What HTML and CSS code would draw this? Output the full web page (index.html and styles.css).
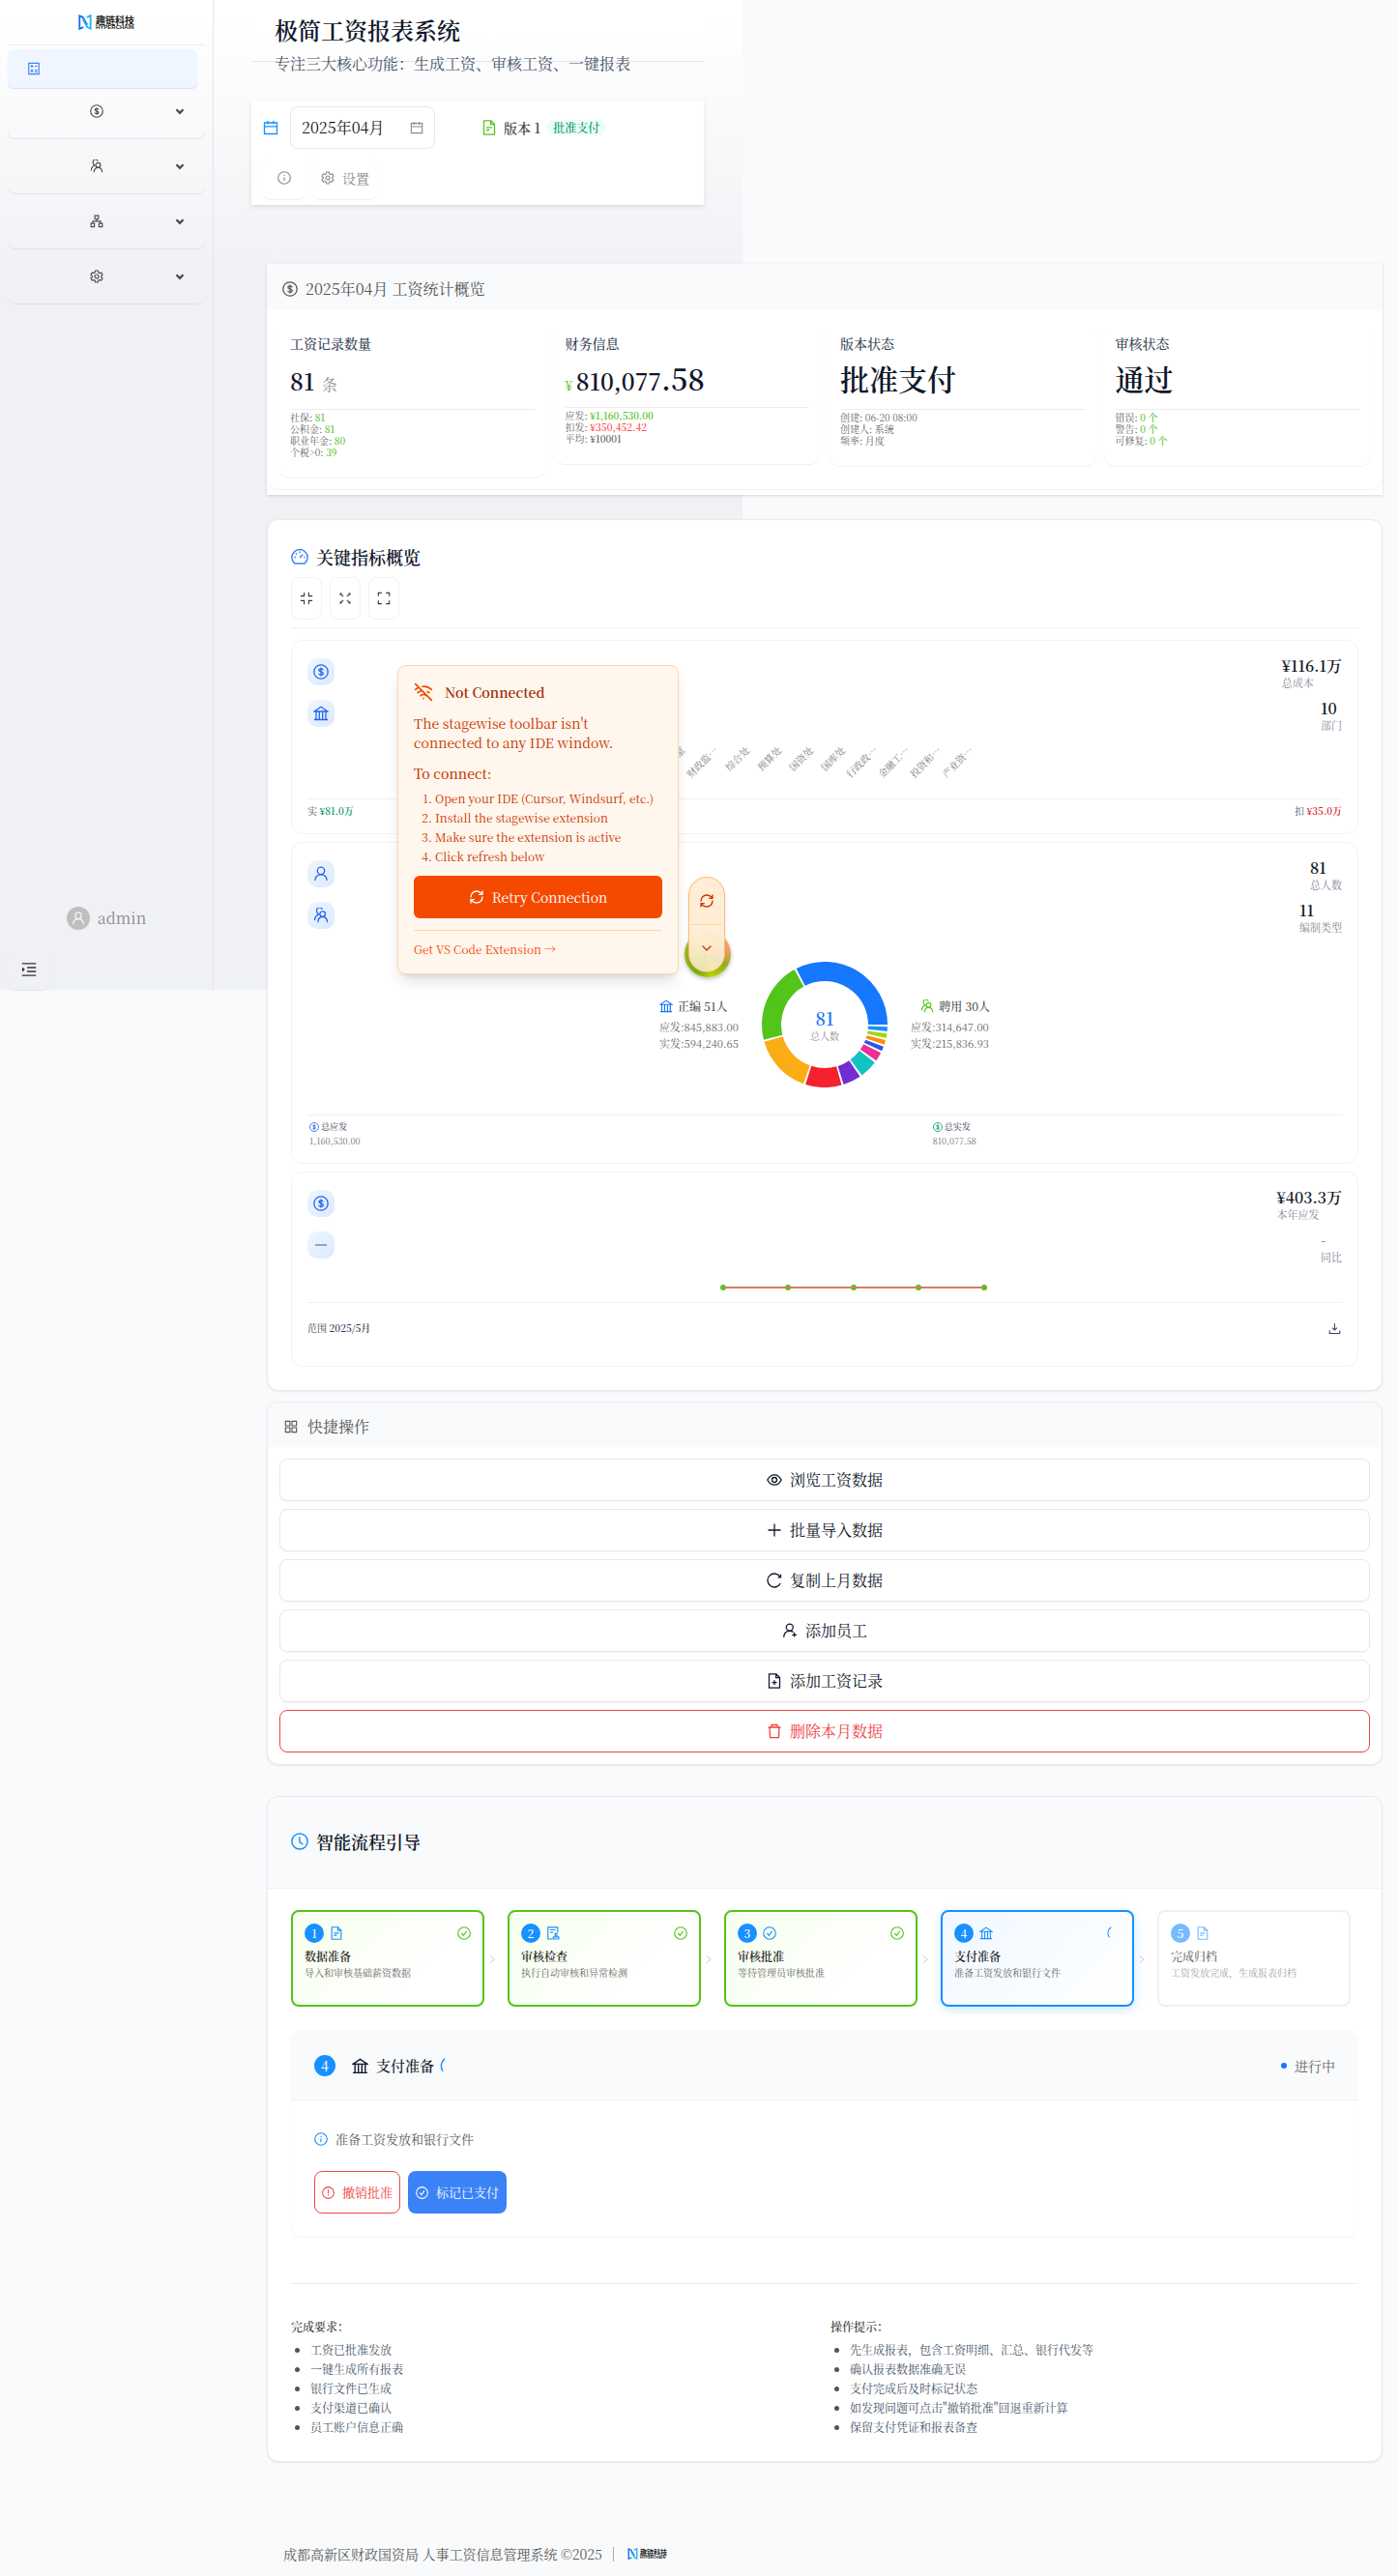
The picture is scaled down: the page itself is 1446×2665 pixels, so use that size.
FILE: index.html
```html
<!DOCTYPE html>
<html lang="zh-CN">
<head>
<meta charset="utf-8">
<meta name="viewport" content="width=device-width, initial-scale=1">
<title>极简工资报表系统</title>
<link rel="stylesheet" href="styles.css">
</head>
<body>
<svg class="sprite" aria-hidden="true">
  <symbol id="calc" viewBox="0 0 16 16"><path d="M2 1.500h12v13H2zM5.700 3.500v3.400M4 5.200h3.400M9 5.200h3M9 9.700h3M9 11.900h3M4.400 9.400l2.600 2.800M7 9.400l-2.600 2.800"/></symbol>
  <symbol id="dollar" viewBox="0 0 16 16"><circle cx="8" cy="8" r="7.200"/><path d="M10.200 6.300C10 5.300 9.200 4.800 8 4.800S5.900 5.400 5.900 6.300C5.900 8.600 10.300 7.300 10.300 9.700c0 1-1 1.500-2.300 1.500S5.800 10.700 5.700 9.700M8 3.600v8.800"/></symbol>
  <symbol id="team" viewBox="0 0 16 16"><circle cx="9.700" cy="6.600" r="2.800"/><path d="M4.800 15.200c.2-3.400 2.100-5.700 4.900-5.700s4.700 2.300 4.900 5.700M9.400 1.900A3 3 0 0 0 3.700 3.800c0 1.400.8 2.500 2 3C3.300 7.800 1.600 10.200 1.500 13.200"/></symbol>
  <symbol id="cluster" viewBox="0 0 16 16"><path d="M5.800 1.300h4.400v3.900H5.800zM1.300 10.500h4v4h-4zM10.700 10.500h4v4h-4zM8 5.200v2.600M3.300 10.500V7.800h9.400v2.700"/></symbol>
  <symbol id="gear" viewBox="0 0 16 16"><circle cx="8" cy="8" r="2.300"/><path d="M6.500 1.200h3l.5 2.100 1.300.8 2.100-.7 1.500 2.600-1.600 1.400v1.400l1.600 1.300-1.500 2.600-2.100-.6-1.300.7-.5 2h-3l-.5-2-1.300-.7-2.100.6-1.500-2.600 1.600-1.300V7.400L1.100 6l1.500-2.600 2.100.7L6 3.300z"/></symbol>
  <symbol id="calendar" viewBox="0 0 16 16"><path d="M1.500 3h13v11.500h-13zM1.500 6.800h13M5 1v3.500M11 1v3.500"/></symbol>
  <symbol id="file" viewBox="0 0 16 16"><path d="M2.500.8h7.300l3.700 3.700v10.700h-11zM9.600.9v3.800h3.800M5 7.900h6M5 10.500h3.400"/></symbol>
  <symbol id="fileadd" viewBox="0 0 16 16"><path d="M2.500.8h7.300l3.700 3.700v10.700h-11zM9.600.9v3.800h3.800M8 7.200v5M5.500 9.700h5"/></symbol>
  <symbol id="info" viewBox="0 0 16 16"><circle cx="8" cy="8" r="7.200"/><path d="M8 7v4.600M8 4.300v1.500"/></symbol>
  <symbol id="warn" viewBox="0 0 16 16"><circle cx="8" cy="8" r="7.200"/><path d="M8 4v5M8 10.300v1.500"/></symbol>
  <symbol id="check" viewBox="0 0 16 16"><circle cx="8" cy="8" r="7.200"/><path d="M5 8l2.300 2.600L11 5.400"/></symbol>
  <symbol id="clock" viewBox="0 0 16 16"><circle cx="8" cy="8" r="7.200"/><path d="M7.900 4v4.500l3 2.200"/></symbol>
  <symbol id="bank" viewBox="0 0 16 16"><path d="M1 6h14L8 1.300zM1 14.500h14M3 6v8.500M6.300 6v8.500M9.700 6v8.500M13 6v8.500"/></symbol>
  <symbol id="user" viewBox="0 0 16 16"><circle cx="8" cy="4.900" r="3.700"/><path d="M1.800 15c.2-3.800 2.700-6.200 6.200-6.200s6 2.400 6.200 6.200"/></symbol>
  <symbol id="useradd" viewBox="0 0 16 16"><circle cx="7.800" cy="4.600" r="3.500"/><path d="M1.700 14.800c.2-4 2.700-6.500 6.100-6.500 1.500 0 2.800.5 3.800 1.300M12.600 10v4.600M10.300 12.300h4.600"/></symbol>
  <symbol id="dash" viewBox="0 0 16 16"><path d="M3.500 14.200A7.200 7.200 0 1 1 12.500 14.200zM8 8.800l2.800-2.900M3 8.500h1.500M11.800 8.500H13M8 3v1.500M4.300 4.700l1 1"/></symbol>
  <symbol id="compress" viewBox="0 0 16 16"><path d="M5.300 1v4.300H1M10.700 1v4.300H15M5.300 15v-4.300H1M10.700 15v-4.300H15"/></symbol>
  <symbol id="shrink" viewBox="0 0 16 16"><path d="M2.500 2.500l3.300 3.300M13.500 2.500l-3.300 3.300M2.500 13.500l3.300-3.300M13.500 13.500l-3.300-3.300M2.300 4V2.300H4M13.700 4V2.300H12M2.300 12v1.700H4M13.700 12v1.700H12"/></symbol>
  <symbol id="expand" viewBox="0 0 16 16"><path d="M1.500 5.500v-4h4M10.500 1.500h4v4M1.500 10.500v4h4M14.500 10.500v4h-4"/></symbol>
  <symbol id="grid" viewBox="0 0 16 16"><path d="M1.500 1.500h5.300v5.300H1.500zM9.200 1.500h5.300v5.300H9.200zM1.500 9.200h5.300v5.300H1.500zM9.200 9.200h5.300v5.300H9.200z"/></symbol>
  <symbol id="eye" viewBox="0 0 16 16"><path d="M.8 8C2.600 4.400 5 2.800 8 2.800S13.400 4.400 15.200 8C13.400 11.600 11 13.200 8 13.200S2.600 11.600.8 8z"/><circle cx="8" cy="8" r="2.500"/></symbol>
  <symbol id="plus" viewBox="0 0 16 16"><path d="M8 1.500v13M1.500 8h13"/></symbol>
  <symbol id="reload" viewBox="0 0 16 16"><path d="M14.300 11A7 7 0 1 1 13.600 3.800M14.500 1.800v3h-3"/></symbol>
  <symbol id="trash" viewBox="0 0 16 16"><path d="M1.500 4h13M5 4V1.500h6V4M3 4l.6 10.700h8.800L13 4"/></symbol>
  <symbol id="audit" viewBox="0 0 16 16"><path d="M7.500 14.800H2V1h11.500v6.500M4.500 4h6.500M4.500 7h3.500M8.300 14.800h6.500v-2.300H8.300zM11.500 12.500v-1.700"/><circle cx="11.500" cy="9.600" r="1.400"/></symbol>
  <symbol id="right" viewBox="0 0 16 16"><path d="M5 3l6 5-6 5"/></symbol>
  <symbol id="spin" viewBox="0 0 16 16"><path d="M2.800 13C.2 8.800.8 3.800 4.800.8"/></symbol>
  <symbol id="download" viewBox="0 0 16 16"><path d="M8 1.500v8M5 7l3 3 3-3M1.500 10.500v3.700h13v-3.700"/></symbol>
  <symbol id="unfold" viewBox="0 0 16 16"><path d="M.8 1.800h14.400M6 6h9.200M6 10h9.200M.8 14.200h14.400"/><path d="M1 5.600v4.800L3.900 8z" fill="currentColor" stroke="none"/></symbol>
  <symbol id="chev" viewBox="0 0 24 24"><path d="M6 9l6 6 6-6"/></symbol>
  <symbol id="refresh" viewBox="0 0 24 24"><path d="M3 12a9 9 0 0 1 9-9 9.750 9.750 0 0 1 6.740 2.740L21 8M21 3v5h-5M21 12a9 9 0 0 1-9 9 9.750 9.750 0 0 1-6.740-2.740L3 16M8 16H3v5"/></symbol>
  <symbol id="wifi" viewBox="0 0 24 24"><path d="M12 20h.01M8.500 16.429a5 5 0 0 1 7 0M5 12.859a10 10 0 0 1 5.170-2.690M19 12.859a10 10 0 0 0-2.007-1.523M2 8.820a15 15 0 0 1 4.177-2.643M22 8.820a15 15 0 0 0-11.288-3.764M2 2l20 20"/></symbol>
  <symbol id="mark" viewBox="0 0 14 16">
    <path d="M5.200 13.200L1.300 14.900V1.400l3.200 1.400 4.700 8" fill="none" stroke="#1668f0" stroke-width="1.800"/>
    <path d="M8.800 2.800l3.900-1.700v13.500l-3.200-1.400-4.700-8" fill="none" stroke="#1fb6f5" stroke-width="1.800"/>
  </symbol>
</svg>

<div class="app">
  <aside class="side">
    <div class="side-logo"><span class="logo"><svg><use href="#mark"/></svg><span><b>趣链科技</b><i>HYPERCHAIN</i></span></span></div>
    <nav class="nav">
      <a href="#" class="nav-item active" aria-label="工资报表"><svg class="i"><use href="#calc"/></svg></a>
      <a href="#" class="nav-item" aria-label="工资"><svg class="i"><use href="#dollar"/></svg><svg class="chev"><use href="#chev"/></svg></a>
      <a href="#" class="nav-item" aria-label="人员"><svg class="i"><use href="#team"/></svg><svg class="chev"><use href="#chev"/></svg></a>
      <a href="#" class="nav-item" aria-label="组织"><svg class="i"><use href="#cluster"/></svg><svg class="chev"><use href="#chev"/></svg></a>
      <a href="#" class="nav-item" aria-label="系统"><svg class="i"><use href="#gear"/></svg><svg class="chev"><use href="#chev"/></svg></a>
    </nav>
    <div class="side-user"><span class="avatar"><svg class="i"><use href="#user"/></svg></span><span>admin</span></div>
    <button class="collapse" aria-label="展开菜单"><svg class="i"><use href="#unfold"/></svg></button>
  </aside>

  <main class="main">
    <header class="head">
      <h1>极简工资报表系统</h1>
      <p>专注三大核心功能：生成工资、审核工资、一键报表</p>
    </header>

    <section class="tools">
      <div class="tools-row">
        <svg class="i blue"><use href="#calendar"/></svg>
        <label class="date"><input type="text" value="2025年04月" aria-label="月份"><svg class="i"><use href="#calendar"/></svg></label>
        <div class="version"><svg class="i green"><use href="#file"/></svg><span>版本 1</span><span class="tag">批准支付</span></div>
      </div>
      <div class="tools-row second">
        <button class="ghost" aria-label="信息"><svg class="i"><use href="#info"/></svg></button>
        <button class="ghost wide"><svg class="i"><use href="#gear"/></svg>设置</button>
      </div>
    </section>

    <div class="content">
      <section class="stats">
        <h2 class="bar"><svg class="i"><use href="#dollar"/></svg>2025年04月 工资统计概览</h2>
        <div class="stat-grid">
          <article class="stat">
            <h3>工资记录数量</h3>
            <div class="value"><span class="mid">81</span> <span class="unit">条</span></div>
            <ul><li>社保: <b class="ok">81</b></li><li>公积金: <b class="ok">81</b></li><li>职业年金: <b class="ok">80</b></li><li>个税&gt;0: <b class="ok">39</b></li></ul>
          </article>
          <article class="stat">
            <h3>财务信息</h3>
            <div class="value money"><span class="yen">¥</span> <span class="mid">810,077</span>.58</div>
            <ul><li>应发: <b class="ok strong">¥1,160,530.00</b></li><li>扣发: <b class="bad strong">¥350,452.42</b></li><li>平均: <b class="strong">¥10001</b></li></ul>
          </article>
          <article class="stat">
            <h3>版本状态</h3>
            <div class="value">批准支付</div>
            <ul><li>创建: 06-20 08:00</li><li>创建人: 系统</li><li>频率: 月度</li></ul>
          </article>
          <article class="stat">
            <h3>审核状态</h3>
            <div class="value">通过</div>
            <ul><li>错误: <b class="ok">0 个</b></li><li>警告: <b class="ok">0 个</b></li><li>可修复: <b class="ok">0 个</b></li></ul>
          </article>
        </div>
      </section>

      <section class="card key">
        <h2 class="title"><svg class="i vivid"><use href="#dash"/></svg>关键指标概览</h2>
        <div class="squares">
          <button aria-label="压缩"><svg class="i"><use href="#compress"/></svg></button>
          <button aria-label="收缩"><svg class="i"><use href="#shrink"/></svg></button>
          <button aria-label="全屏"><svg class="i"><use href="#expand"/></svg></button>
        </div>
        <div class="panels">
          <article class="panel">
            <div class="panel-head">
              <div class="tiles"><span class="tile"><svg class="i"><use href="#dollar"/></svg></span><span class="tile"><svg class="i"><use href="#bank"/></svg></span></div>
              <div class="figures"><div><strong>¥116.1万</strong><small>总成本</small></div><div><strong>10</strong><small>部门</small></div></div>
            </div>
            <svg class="chart-a" viewBox="0 0 680 68">
              <g class="axis">
                <text transform="translate(196 19) rotate(-45)">办公室</text>
                <text transform="translate(230 19) rotate(-45)">财政监…</text>
                <text transform="translate(263 19) rotate(-45)">综合处</text>
                <text transform="translate(296 19) rotate(-45)">预算处</text>
                <text transform="translate(329 19) rotate(-45)">国资处</text>
                <text transform="translate(362 19) rotate(-45)">国库处</text>
                <text transform="translate(395 19) rotate(-45)">行政政…</text>
                <text transform="translate(428 19) rotate(-45)">金融工…</text>
                <text transform="translate(461 19) rotate(-45)">投资和…</text>
                <text transform="translate(494 19) rotate(-45)">产业资…</text>
              </g>
            </svg>
            <div class="foot between"><span>实 <b class="emerald">¥81.0万</b></span><span>扣 <b class="red">¥35.0万</b></span></div>
          </article>

          <article class="panel">
            <div class="panel-head">
              <div class="tiles"><span class="tile"><svg class="i"><use href="#user"/></svg></span><span class="tile"><svg class="i"><use href="#team"/></svg></span></div>
              <div class="figures"><div><strong>81</strong><small>总人数</small></div><div><strong>11</strong><small>编制类型</small></div></div>
            </div>
            <div class="donut-row">
              <div class="staff"><h4><svg class="i link"><use href="#bank"/></svg>正编 51人</h4><p>应发:845,883.00</p><p>实发:594,240.65</p></div>
              <svg class="donut" viewBox="-65 -65 130 130">
                <g id="ring"></g>
                <text y="1" class="donut-num">81</text>
                <text y="16" class="donut-cap">总人数</text>
              </svg>
              <div class="staff end"><h4><svg class="i green"><use href="#team"/></svg>聘用 30人</h4><p>应发:314,647.00</p><p>实发:215,836.93</p></div>
            </div>
            <div class="foot sums">
              <div><span><svg class="i royal"><use href="#dollar"/></svg>总应发</span><small>1,160,530.00</small></div>
              <div><span><svg class="i emerald"><use href="#dollar"/></svg>总实发</span><small>810,077.58</small></div>
            </div>
          </article>

          <article class="panel">
            <div class="panel-head">
              <div class="tiles"><span class="tile"><svg class="i"><use href="#dollar"/></svg></span><span class="tile"><span class="dash"></span></span></div>
              <div class="figures"><div><strong>¥403.3万</strong><small>本年应发</small></div><div><strong class="muted">-</strong><small>同比</small></div></div>
            </div>
            <svg class="chart-c" viewBox="0 0 340 39">
              <g fill="#52c41a"><circle cx="65" cy="24" r="3"/><circle cx="132" cy="24" r="3"/><circle cx="200" cy="24" r="3"/><circle cx="267" cy="24" r="3"/><circle cx="335" cy="24" r="3"/></g>
              <path d="M65 24h270" stroke="#d4805f" stroke-width="2"/>
            </svg>
            <div class="foot between tall"><span>范围 <b>2025/5月</b></span><button aria-label="下载"><svg class="i"><use href="#download"/></svg></button></div>
          </article>
        </div>
      </section>

      <section class="card quick">
        <h2 class="bar"><svg class="i"><use href="#grid"/></svg>快捷操作</h2>
        <div class="quick-list">
          <button><svg class="i"><use href="#eye"/></svg>浏览工资数据</button>
          <button><svg class="i"><use href="#plus"/></svg>批量导入数据</button>
          <button><svg class="i"><use href="#reload"/></svg>复制上月数据</button>
          <button><svg class="i"><use href="#useradd"/></svg>添加员工</button>
          <button><svg class="i"><use href="#fileadd"/></svg>添加工资记录</button>
          <button class="danger"><svg class="i"><use href="#trash"/></svg>删除本月数据</button>
        </div>
      </section>

      <section class="card flow">
        <div class="flow-head"><h2 class="title"><svg class="i blue"><use href="#clock"/></svg>智能流程引导</h2></div>
        <div class="flow-body">
          <div class="steps">
            <article class="step done"><div class="step-top"><span class="num">1</span><svg class="i"><use href="#file"/></svg><svg class="i state"><use href="#check"/></svg></div><h3>数据准备</h3><p>导入和审核基础薪资数据</p><svg class="i arrow"><use href="#right"/></svg></article>
            <article class="step done"><div class="step-top"><span class="num">2</span><svg class="i"><use href="#audit"/></svg><svg class="i state"><use href="#check"/></svg></div><h3>审核检查</h3><p>执行自动审核和异常检测</p><svg class="i arrow"><use href="#right"/></svg></article>
            <article class="step done"><div class="step-top"><span class="num">3</span><svg class="i"><use href="#check"/></svg><svg class="i state"><use href="#check"/></svg></div><h3>审核批准</h3><p>等待管理员审核批准</p><svg class="i arrow"><use href="#right"/></svg></article>
            <article class="step current"><div class="step-top"><span class="num">4</span><svg class="i"><use href="#bank"/></svg><svg class="i state"><use href="#spin"/></svg></div><h3>支付准备</h3><p>准备工资发放和银行文件</p><svg class="i arrow"><use href="#right"/></svg></article>
            <article class="step todo"><div class="step-top"><span class="num">5</span><svg class="i"><use href="#file"/></svg></div><h3>完成归档</h3><p>工资发放完成，生成报表归档</p></article>
          </div>
          <article class="detail">
            <header><span class="num big">4</span><svg class="i"><use href="#bank"/></svg><h3>支付准备</h3><svg class="i spin"><use href="#spin"/></svg><span class="doing">进行中</span></header>
            <div class="detail-body">
              <p><svg class="i blue"><use href="#info"/></svg>准备工资发放和银行文件</p>
              <div class="actions"><button class="outline"><svg class="i"><use href="#warn"/></svg>撤销批准</button><button class="solid"><svg class="i"><use href="#check"/></svg>标记已支付</button></div>
            </div>
          </article>
          <div class="notes">
            <div><h4>完成要求：</h4><ul><li>工资已批准发放</li><li>一键生成所有报表</li><li>银行文件已生成</li><li>支付渠道已确认</li><li>员工账户信息正确</li></ul></div>
            <div><h4>操作提示：</h4><ul><li>先生成报表，包含工资明细、汇总、银行代发等</li><li>确认报表数据准确无误</li><li>支付完成后及时标记状态</li><li>如发现问题可点击"撤销批准"回退重新计算</li><li>保留支付凭证和报表备查</li></ul></div>
          </div>
        </div>
      </section>

      <footer class="footer"><span>成都高新区财政国资局 人事工资信息管理系统 ©2025</span><i class="sep"></i><span class="logo small"><svg><use href="#mark"/></svg><span><b>趣链科技</b><i>HYPERCHAIN</i></span></span></footer>
    </div>
  </main>

  <div class="orb"></div>
  <div class="pill"><button aria-label="刷新"><svg class="lu"><use href="#refresh"/></svg></button><button aria-label="收起"><svg class="lu"><use href="#chev"/></svg></button></div>
  <aside class="popup">
    <h2><svg class="lu"><use href="#wifi"/></svg>Not Connected</h2>
    <p>The stagewise toolbar isn't connected to any IDE window.</p>
    <h3>To connect:</h3>
    <ol><li>Open your IDE (Cursor, Windsurf, etc.)</li><li>Install the stagewise extension</li><li>Make sure the extension is active</li><li>Click refresh below</li></ol>
    <button><svg class="lu"><use href="#refresh"/></svg>Retry Connection</button>
    <div class="popup-foot"><a href="#">Get VS Code Extension →</a></div>
  </aside>
</div>
<script src="chart.js"></script>
</body>
</html>
```
FILE: styles.css
```css
* { box-sizing: border-box; }
body, h1, h2, h3, h4, p, ul, ol { margin: 0; padding: 0; }
ul { list-style: none; }
a { color: inherit; text-decoration: none; }
b, strong { font-weight: 600; }
button, input { font: inherit; color: inherit; background: none; border: 0; padding: 0; }
button { display: inline-flex; align-items: center; justify-content: center; }
body {
  font-family: "Noto Serif CJK SC", "Source Han Serif SC", "Liberation Serif", "Noto Sans CJK SC", serif;
  font-size: 14px; line-height: 22px; color: #5a5a5a; background: #f8fafc;
}
.sprite { display: none; }
.i, .lu, .chev { flex: none; fill: none; stroke: currentColor; stroke-width: 1.3; width: 14px; height: 14px; display: block; }
.lu { stroke-width: 2; stroke-linecap: round; stroke-linejoin: round; width: 16px; height: 16px; }
.logo { display: flex; align-items: center; gap: 4px; font-family: "Noto Sans CJK SC", sans-serif; color: #222; }
.logo svg { flex: none; width: 14px; height: 16px; }
.logo b { display: block; font-size: 10px; line-height: 11px; font-weight: 700; }
.logo i { display: block; font: 700 6px/5px "Liberation Sans", sans-serif; }
.logo.small { gap: 2px; }
.logo.small svg { width: 11px; height: 12px; }
.logo.small b { font-size: 7px; line-height: 8px; }
.logo.small i { font-size: 4px; line-height: 4px; }
.blue { color: #1890ff; }
.vivid { color: #3b82f6; }
.link { color: #1677ff; }
.royal { color: #2563eb; }
.green, .ok { color: #52c41a; }
.bad { color: #ff4d4f; }
.emerald { color: #059669; }
.red { color: #dc2626; }

.app {
  position: relative; display: flex; align-items: flex-start;
  background: linear-gradient(180deg, #fff 0, #fff 20px, #f0f1f5 300px) 0 0 / 768px 1024px no-repeat;
}

.side { flex: none; width: 221px; height: 1024px; padding: 0 8px; border-right: 1px solid #e4e5e9; display: flex; flex-direction: column; }
.side-logo { height: 47px; display: flex; align-items: center; justify-content: center; border-bottom: 1px solid #ededf0; }
.nav { padding-top: 4px; flex: 1; }
.nav-item { display: flex; align-items: center; height: 56px; margin-bottom: 1px; padding-left: 85px; padding-right: 19px; border-radius: 8px; box-shadow: 0 1px 0 #e2e3e7; color: #4b4b4b; }
.nav-item.active { height: 40px; margin: 0 8px -4px 0; padding-left: 20px; background: #eff6ff; color: #3b82f6; box-shadow: 0 1px 1px #d5dff0; border-radius: 6px; }
.nav-item .chev { margin-left: auto; width: 14px; height: 14px; stroke-width: 4; }
.side-user { display: flex; align-items: center; justify-content: center; gap: 8px; height: 24px; margin-bottom: 20px; font-size: 16px; color: #8c8c8c; }
.avatar { width: 24px; height: 24px; border-radius: 50%; background: #bfbfbf; color: #fff; display: flex; align-items: center; justify-content: center; }
.collapse { width: 44px; height: 42px; border-radius: 8px; box-shadow: 0 1px 1px #e4e5e9; color: #333; }
.collapse .i { width: 16px; height: 16px; }

.main { flex: 1; min-width: 0; padding: 0 16px 0 39px; }
.head { width: 468px; height: 64px; padding: 15px 24px 0; background: rgba(255,255,255,.6); border-bottom: 1px solid #e3e4e8; }
.head h1 { font-size: 24px; line-height: 32px; font-weight: 600; color: #0f172a; }
.head p { font-size: 16px; line-height: 24px; margin-top: 7px; color: #475569; white-space: nowrap; }

.tools { width: 468px; margin-top: 40px; padding: 6px 12px; background: #fff; box-shadow: 0 2px 5px rgba(0,0,0,.1); }
.tools-row { display: flex; align-items: center; height: 44px; }
.tools-row.second { margin-top: 8px; gap: 8px; color: #8c8c8c; }
.tools-row > .i { width: 16px; height: 16px; }
.date { display: flex; align-items: center; width: 150px; height: 44px; margin-left: 12px; padding: 0 11px; border: 1px solid #e5e7eb; border-radius: 8px; color: #8c8c8c; }
.date input { flex: 1; min-width: 0; font-size: 16px; color: #0f172a; outline: none; }
.version { display: flex; align-items: center; gap: 7px; margin-left: 48px; font-weight: 500; color: #333; }
.version .i { width: 16px; height: 16px; }
.tag { padding: 0 6px; font-size: 12px; line-height: 16px; border-radius: 6px; background: #ecfdf5; color: #059669; }
.ghost { width: 44px; height: 44px; border-radius: 8px; box-shadow: 0 1px 1px #eee; }
.ghost.wide { width: 66px; gap: 8px; }

.content { padding-left: 16px; }
.bar { display: flex; align-items: center; gap: 8px; font-size: 16px; font-weight: 400; color: #555; background: #f8fafc; }
.stats { margin-top: 61px; padding-bottom: 6px; background: #fff; box-shadow: 0 1px 3px rgba(0,0,0,.14); }
.stats .bar { height: 48px; padding: 3px 16px 0; }
.stats .bar .i { width: 16px; height: 16px; }
.stat-grid { display: grid; grid-template-columns: repeat(4, 1fr); gap: 8px; align-items: start; padding: 12px; border-radius: 0 0 12px 12px; box-shadow: 0 1px 0 #f1f1f3; }
.stat { padding: 11px 12px 20px; border-radius: 12px; box-shadow: 0 1px 1px #f0f0f2; }
.stat h3 { font-size: 14px; font-weight: 500; color: #334155; }
.value { font-size: 30px; line-height: 50px; padding-bottom: 7px; font-weight: 600; color: #0f172a; white-space: nowrap; border-bottom: 1px solid #ececee; }
.value.money { padding-bottom: 5px; }
.value span { line-height: 24px; }
.value .mid { font-size: 24px; }
.value .unit { font-size: 16px; font-weight: 400; color: #8c8c9c; }
.value .yen { font-size: 14px; font-weight: 400; color: #52c41a; margin-right: -4px; }
.stat ul { padding-top: 2px; font-size: 10px; line-height: 12px; color: #666; }
.stat b { font-weight: 500; }
.stat b.strong { font-weight: 600; }

.card { background: #fff; border: 1px solid #e8eaed; border-radius: 12px; box-shadow: 0 1px 2px rgba(0,0,0,.08); }
.title { display: flex; align-items: center; gap: 8px; font-size: 18px; line-height: 28px; font-weight: 600; color: #0f172a; }
.title .i { width: 18px; height: 18px; }
.key { margin-top: 25px; padding: 24px; }
.squares { display: flex; gap: 8px; padding: 7px 0 8px; border-bottom: 1px solid #f0f0f2; }
.squares button { width: 32px; height: 44px; border: 1px solid #f1f1f4; border-radius: 8px; color: #333a48; }
.panels { display: grid; gap: 8px; margin-top: 12px; }
.panel { padding: 17px 16px 15px; border: 1px solid #f1f2f4; border-radius: 12px; }
.panel-head { display: flex; justify-content: space-between; }
.tiles { display: grid; gap: 15px; align-content: start; padding-top: 1px; height: 78px; }
.tile { width: 28px; height: 28px; border-radius: 10px; background: linear-gradient(135deg, #eff6ff, #dbeafe); color: #2563eb; display: flex; align-items: center; justify-content: center; }
.tile .i { width: 16px; height: 16px; }
.tile .dash { width: 12px; height: 2px; background: #94a3b8; }
.figures { display: grid; gap: 10px; justify-items: end; }
.figures strong { display: block; font-size: 16px; line-height: 18px; color: #0f172a; }
.figures strong.muted { color: #8c8c8c; font-weight: 400; }
.figures small { display: block; font-size: 11px; line-height: 16px; color: #7f8694; }
.chart-a { display: block; width: 680px; height: 68px; margin: 0 auto; }
.axis { font-size: 10px; text-anchor: end; fill: #7a7a7a; }
.foot { border-top: 1px solid #f0f0f2; padding-top: 4px; font-size: 10px; line-height: 16px; color: #475569; }
.between { display: flex; justify-content: space-between; align-items: center; }
.foot.tall { padding: 18px 0 16px; color: #334155; }
.foot.tall .i { width: 13px; height: 13px; margin-right: 1px; }
.donut-row { display: flex; align-items: center; justify-content: center; gap: 24px; height: 186px; }
.donut { width: 130px; height: 130px; }
.donut text { text-anchor: middle; }
.donut-num { font-size: 18px; font-weight: 600; fill: #1677ff; }
.donut-cap { font-size: 10px; fill: #8c8c8c; }
.staff { width: 82px; font-size: 11px; line-height: 17px; color: #666; white-space: nowrap; }
.staff h4 { display: flex; align-items: center; gap: 5px; margin-bottom: 5px; font-size: 12px; font-weight: 500; color: #4a4a4a; }
.staff.end h4 { justify-content: flex-end; }
.sums { display: grid; grid-template-columns: 3fr 2fr; font-size: 9px; padding-left: 2px; }
.sums > div + div { padding-left: 4px; }
.sums span { display: flex; align-items: center; gap: 2px; font-weight: 500; }
.sums .i { width: 10px; height: 10px; }
.sums small { display: block; font-size: 9px; line-height: 14px; color: #6b7280; }
.chart-c { display: block; width: 340px; height: 39px; margin: 0 auto; }

.quick { margin-top: 11px; overflow: hidden; }
.quick .bar { height: 46px; padding: 4px 17px 0; gap: 10px; }
.quick-list { display: grid; gap: 8px; padding: 12px; }
.quick-list button { height: 44px; gap: 8px; border: 1px solid #e5e7eb; border-radius: 8px; font-size: 16px; color: #0f172a; box-shadow: 0 1px 1px rgba(0,0,0,.04); }
.quick-list .i { width: 16px; height: 16px; }
.quick-list .danger { border-color: #ef4444; color: #ef4444; }

.flow { margin-top: 32px; overflow: hidden; }
.flow-head { height: 95px; padding: 0 24px 2px; display: flex; align-items: center; background: #f8fafc; border-bottom: 1px solid #f0f0f2; }
.flow-body { padding: 0 24px 25px; }
.steps { display: grid; grid-template-columns: repeat(5, 1fr); gap: 24px; padding: 22px 8px 8px 0; overflow: hidden; }
.step { position: relative; height: 100px; padding: 12px; border: 2px solid #f0f0f0; border-radius: 8px; color: #1890ff; }
.step-top { display: flex; align-items: center; gap: 6px; }
.num { width: 20px; height: 20px; border-radius: 50%; background: #1890ff; color: #fff; font-size: 12px; line-height: 20px; text-align: center; font-weight: 500; }
.state { margin-left: auto; }
.step h3 { margin-top: 5px; font-size: 12px; line-height: 18px; font-weight: 600; color: #262626; }
.step p { margin-top: 1px; font-size: 10px; line-height: 14px; color: #666; }
.done { border-color: #52c41a; background: linear-gradient(135deg, #f6ffed, #fff 70%); }
.done .state { color: #52c41a; }
.current { border-color: #1890ff; background: linear-gradient(135deg, #f0f8ff, #fff); box-shadow: 0 4px 12px rgba(24,144,255,.2); }
.todo > * { opacity: .6; }
.arrow { position: absolute; right: -16px; top: 43px; width: 12px; height: 12px; color: #ccc; }

.detail { margin-top: 16px; border-radius: 12px; box-shadow: 0 1px 1px #f0f0f2; }
.detail header { display: flex; align-items: center; height: 73px; padding: 2px 24px 0; background: #f8fafc; border-bottom: 1px solid #f0f0f2; border-radius: 12px 12px 0 0; color: #0f172a; }
.detail h3 { margin: 0 6px 0 8px; font-size: 15px; font-weight: 500; }
.num.big { width: 22px; height: 22px; margin-right: 17px; font-size: 14px; line-height: 22px; }
.detail header .i { width: 17px; height: 17px; }
.detail header .spin { color: #1890ff; }
.doing { display: flex; align-items: center; gap: 8px; margin-left: auto; color: #666; }
.doing::before { content: ""; width: 6px; height: 6px; border-radius: 50%; background: #1677ff; }
.detail-body { padding: 29px 24px 24px; }
.detail-body p { display: flex; align-items: center; gap: 8px; font-size: 13px; color: #5a5a5a; }
.actions { display: flex; gap: 8px; margin-top: 22px; }
.actions button { height: 44px; padding: 0 8px; gap: 8px; border-radius: 8px; font-size: 13px; }
.actions .i { width: 13px; height: 13px; }
.actions .outline { padding: 0 7px; border: 1px solid #ef4444; color: #ef4444; }
.actions .solid { background: #3b82f6; color: #fff; }
.notes { display: grid; grid-template-columns: 1fr 1fr; gap: 12px; margin-top: 48px; padding-top: 34px; border-top: 1px solid #ececee; font-size: 12px; line-height: 20px; color: #475569; }
.notes h4 { margin-bottom: 4px; font-size: 12px; font-weight: 500; color: #333; }
.notes ul { list-style: disc; padding-left: 20px; }

.footer { display: flex; align-items: center; margin-top: 84px; padding: 0 0 11px 17px; }
.sep { width: 1px; height: 15px; margin: 0 14px 0 11px; background: #aaa; }

.popup { position: absolute; left: 411px; top: 688px; width: 291px; height: 320px; padding: 15px 16px; border: 1px solid #ffd6a7; border-radius: 8px; background: #fff7ed; color: #ca3500; box-shadow: 0 10px 15px -3px rgba(0,0,0,.12), 0 4px 6px -4px rgba(0,0,0,.1); line-height: 20px; }
.popup h2 { display: flex; align-items: center; gap: 12px; height: 24px; font-size: 14px; font-weight: 600; color: #9f2d00; }
.popup h2 .lu { width: 20px; height: 20px; color: #f54900; }
.popup p { margin-top: 10px; padding-right: 24px; }
.popup h3 { margin-top: 12px; font-size: 14px; font-weight: 500; }
.popup ol { margin-top: 6px; padding-left: 22px; font-size: 12px; }
.popup button { width: 100%; height: 44px; margin-top: 10px; gap: 8px; border-radius: 6px; background: #f54900; color: #fff; }
.popup-foot { margin-top: 12px; padding-top: 9px; border-top: 1px solid #ffd6a7; font-size: 12px; color: #f54900; }
.orb { position: absolute; left: 708px; top: 963px; width: 48px; height: 48px; border-radius: 50%; background: conic-gradient(#e8d060, #f59a6b 80deg, #8fb01e 120deg, #b9d400 170deg, #7fae12 210deg, #a3b81d 280deg, #d9d040 330deg, #e8d060); box-shadow: 0 2px 4px rgba(0,0,0,.25); }
.pill { position: absolute; left: 712px; top: 907px; width: 38px; height: 99px; border: 1px solid #fdba74; border-radius: 19px; background: linear-gradient(180deg, #ffedd5 50%, rgba(255,240,214,.8)); color: #ca3500; display: flex; flex-direction: column; padding: 0 2px; box-shadow: 0 1px 3px rgba(0,0,0,.1); }
.pill button { flex: 1; }
.pill button + button { border-top: 1px solid #ffd6a7; }
```
FILE: chart.js
```js
// Staff per employment type, drawn counter-clockwise from east with a 2° gap.
const counts = [28, 18, 13, 8, 4, 4, 2, 1, 1, 1, 1];
const colors = ["#1677ff", "#52c41a", "#faad14", "#f5222d", "#722ed1", "#13c2c2", "#eb2f96", "#2f54eb", "#fa8c16", "#a0d911", "#1890ff"];
const total = counts.reduce((a, b) => a + b, 0);
const unit = (360 - 2 * counts.length) / total;
const point = (r, deg) => {
  const a = deg * Math.PI / 180;
  return (r * Math.cos(a)).toFixed(2) + " " + (-r * Math.sin(a)).toFixed(2);
};
const ring = document.getElementById("ring");
let start = 0;
counts.forEach((n, i) => {
  const end = start + n * unit;
  const path = document.createElementNS("http://www.w3.org/2000/svg", "path");
  path.setAttribute("d", `M${point(65, start)}A65 65 0 0 0 ${point(65, end)}L${point(45, end)}A45 45 0 0 1 ${point(45, start)}Z`);
  path.setAttribute("fill", colors[i]);
  ring.appendChild(path);
  start = end + 2;
});
```
